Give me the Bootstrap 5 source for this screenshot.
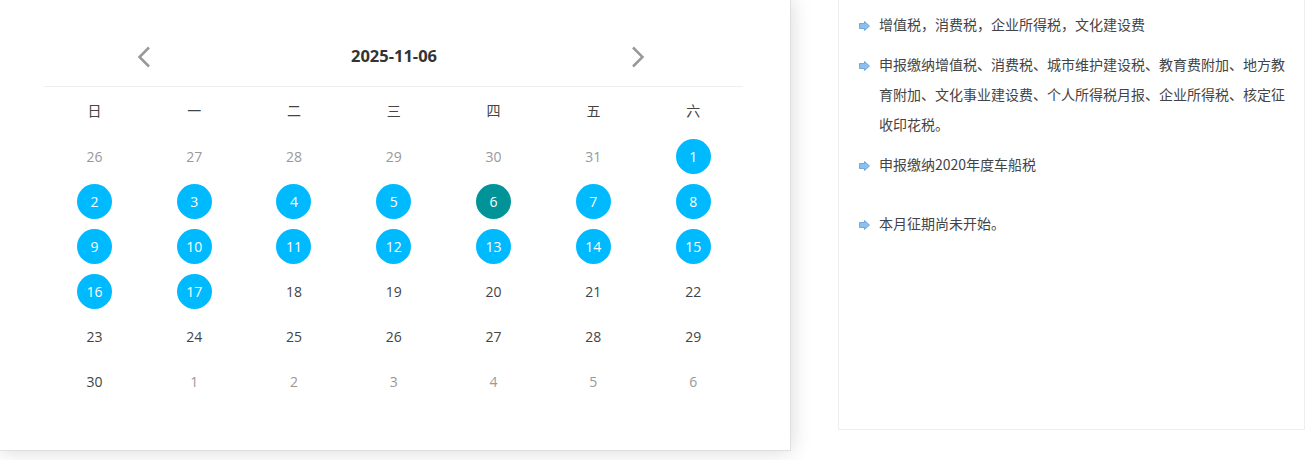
<!DOCTYPE html>
<html lang="zh-CN">
<head>
  <meta charset="UTF-8">
  <title>征期日历</title>
  <link href="https://cdn.jsdelivr.net/npm/bootstrap@5.3.3/dist/css/bootstrap.min.css" rel="stylesheet">
  <style>
    html, body { overflow: hidden; height: 460px; }
    body { font-family: "Open Sans", "Noto Sans CJK SC", sans-serif; font-size: 14px; color: #444; background: #fff; }
    .cal-panel { width: 791px; height: 451px; flex: none; padding: 25px 47px 0 44px; box-shadow: 0 0 20px rgba(0, 0, 0, .16); border-right: 1px solid #e0e0e0; border-bottom: 1px solid #e0e0e0; }
    .cal-head { height: 62px; padding: 2px 97px 0 92px; border-bottom: 1px solid #eee; }
    .cal-title { font-size: 16.5px; font-weight: 700; color: #333; margin-left: 6px; }
    .cal-grid { display: grid; grid-template-columns: repeat(7, 1fr); grid-auto-rows: 45px; width: 698.6px; margin: 2px 0 0 .5px; }
    .cal-cell { display: flex; align-items: center; justify-content: center; }
    .cal-week { padding-bottom: 2px; }
    .cal-day { width: 35px; height: 35px; border-radius: 50%; display: flex; align-items: center; justify-content: center; }
    .cal-muted { color: #999; }
    .cal-on { background: #00baff; color: #fff; }
    .cal-today { background: #009499; color: #fff; }
    .tax-panel { width: 467px; height: 430px; flex: none; margin-left: 47px; padding: 9px 18px 0 20px; border: 1px solid #eee; border-top: 0; }
    .tax-list { list-style: none; padding: 0; margin: 0 0 29px; }
    .tax-list li { display: flex; line-height: 30px; margin-bottom: 10px; font-family: "Noto Sans CJK SC", sans-serif; font-size: 14px; }
    .tax-list svg { flex: none; margin: 12px 9px 0 0; }
  </style>
</head>
<body>
  <div class="d-flex align-items-start">
    <div class="cal-panel bg-white">
      <div class="cal-head d-flex align-items-center justify-content-between">
        <svg width="16" height="22" viewBox="0 0 16 22"><path d="M13 1.5 3.5 11 13 20.500" fill="none" stroke="#999" stroke-width="2.500"/></svg>
        <span class="cal-title">2025-11-06</span>
        <svg width="16" height="22" viewBox="0 0 16 22"><path d="M3 1.500 12.500 11 3 20.500" fill="none" stroke="#999" stroke-width="2.500"/></svg>
      </div>
      <div class="cal-grid" id="grid"></div>
    </div>
    <div class="tax-panel bg-white">
      <ul class="tax-list">
        <li><svg width="11" height="10" viewBox="0 0 11 10"><path d="M.5 2.500h5V.5l5 4.500-5 4.500v-2h-5z" fill="#8cc0ee" stroke="#5f9bd3" stroke-width=".8"/></svg><span>增值税，消费税，企业所得税，文化建设费</span></li>
        <li><svg width="11" height="10" viewBox="0 0 11 10"><path d="M.5 2.500h5V.5l5 4.500-5 4.500v-2h-5z" fill="#8cc0ee" stroke="#5f9bd3" stroke-width=".8"/></svg><span>申报缴纳增值税、消费税、城市维护建设税、教育费附加、地方教育附加、文化事业建设费、个人所得税月报、企业所得税、核定征收印花税。</span></li>
        <li><svg width="11" height="10" viewBox="0 0 11 10"><path d="M.5 2.500h5V.5l5 4.500-5 4.500v-2h-5z" fill="#8cc0ee" stroke="#5f9bd3" stroke-width=".8"/></svg><span>申报缴纳2020年度车船税</span></li>
      </ul>
      <ul class="tax-list">
        <li><svg width="11" height="10" viewBox="0 0 11 10"><path d="M.5 2.500h5V.5l5 4.500-5 4.500v-2h-5z" fill="#8cc0ee" stroke="#5f9bd3" stroke-width=".8"/></svg><span>本月征期尚未开始。</span></li>
      </ul>
    </div>
  </div>

  <script>
    const grid = document.getElementById('grid');
    const semana = ['日', '一', '二', '三', '四', '五', '六'];
    const dias = [26, 27, 28, 29, 30, 31];
    for (let d = 1; d <= 30; d++) dias.push(d);
    for (let d = 1; d <= 6; d++) dias.push(d);

    semana.forEach(s => {
      grid.innerHTML += `<div class="cal-cell cal-week">${s}</div>`;
    });
    dias.forEach((d, i) => {
      const actual = i >= 6 && i < 36;
      let cls = 'cal-day';
      if (!actual) cls += ' cal-muted';
      else if (d === 6) cls += ' cal-today';
      else if (d <= 17) cls += ' cal-on';
      grid.innerHTML += `<div class="cal-cell"><span class="${cls}">${d}</span></div>`;
    });
  </script>
  <script src="https://cdn.jsdelivr.net/npm/bootstrap@5.3.3/dist/js/bootstrap.bundle.min.js"></script>
</body>
</html>
